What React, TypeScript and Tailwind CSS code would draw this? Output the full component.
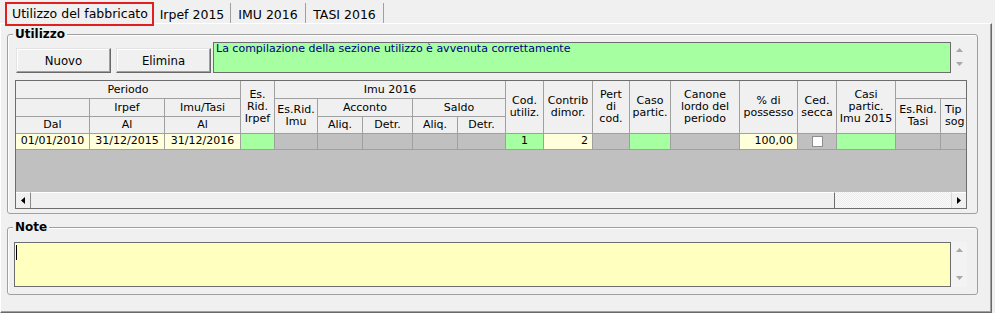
import React from "react";

const hc =
  "flex items-center justify-center text-center border-r border-b border-[#a0a0a0] bg-[#f0f0f0] leading-[12px] overflow-hidden whitespace-nowrap";
const dc = "flex items-center border-r border-b border-[#a0a0a0] overflow-hidden whitespace-nowrap";

function Group({
  label,
  className,
  children,
}: {
  label: string;
  className: string;
  children: React.ReactNode;
}) {
  return (
    <div className={`relative border border-[#a0a0a0] rounded-[3px] shadow-[inset_1px_1px_0_#ffffff] ${className}`}>
      <span className="absolute left-[5px] top-[-8px] px-[2px] bg-[#f0f0f0] text-[12px] font-bold leading-[14px]">
        {label}
      </span>
      {children}
    </div>
  );
}

function UpDown({ topGap, midGap }: { topGap: string; midGap: string }) {
  return (
    <div className="w-[16px] flex flex-col items-center">
      <svg width="7" height="4" className={topGap}>
        <polygon points="0,4 3.5,0 7,4" fill="#a8a8a8" />
      </svg>
      <svg width="7" height="4" className={midGap}>
        <polygon points="0,0 3.5,4 7,0" fill="#a8a8a8" />
      </svg>
    </div>
  );
}

function Btn({ children, className }: { children: React.ReactNode; className: string }) {
  return (
    <div
      className={`h-[25px] w-[95px] flex items-center justify-center bg-[#f0f0f0] border border-t-[#e3e3e3] border-l-[#e3e3e3] border-r-[#696969] border-b-[#696969] shadow-[inset_-1px_-1px_0_#a0a0a0,inset_1px_1px_0_#ffffff] text-[13px] font-['DejaVu_Sans_Condensed','DejaVu_Sans',sans-serif] ${className}`}
    >
      {children}
    </div>
  );
}

export default function App() {
  return (
    <div className="w-[995px] h-[313px] bg-[#f0f0f0] flex flex-col font-['DejaVu_Sans',sans-serif] text-black overflow-hidden">
      {/* Tabs */}
      <div className="h-[23px] shrink-0 flex items-end pl-[5px] relative z-10 text-[12.5px]">
        <div className="h-[24px] mb-[-3px] w-[149px] border-2 border-[#e02020] bg-[#f0f0f0] pl-[5px] leading-[20px] whitespace-nowrap">
          Utilizzo del fabbricato
        </div>
        <div className="h-[20px] w-[77px] border-r border-[#a0a0a0] pt-[3px] leading-[17px] text-center whitespace-nowrap">
          Irpef 2015
        </div>
        <div className="h-[20px] w-[75px] border-r border-[#a0a0a0] pt-[3px] leading-[17px] text-center whitespace-nowrap">
          IMU 2016
        </div>
        <div className="h-[20px] w-[78px] border-r border-[#a0a0a0] pt-[3px] leading-[17px] text-center whitespace-nowrap">
          TASI 2016
        </div>
      </div>

      {/* Panel */}
      <div className="h-[290px] w-[992px] border-t border-l border-t-white border-l-white border-r border-b border-r-[#696969] border-b-[#696969] shadow-[inset_-1px_-1px_0_#a0a0a0] pl-[6px] flex flex-col">
        <Group label="Utilizzo" className="mt-[10px] h-[180px] w-[971px] pl-[7px] pt-[7px] flex flex-col">
          <div className="h-[31px] flex items-end">
            <Btn className="ml-[1px]">Nuovo</Btn>
            <Btn className="ml-[5px]">Elimina</Btn>
            <div className="ml-[2px] w-[738px] h-[31px] self-start bg-[#a6ffa0] border border-[#6d6d6d] pl-[2px] text-[11px] leading-[12px] text-[#000080] whitespace-nowrap">
              La compilazione della sezione utilizzo è avvenuta correttamente
            </div>
            <div className="self-start h-[31px]">
              <UpDown topGap="mt-[6px]" midGap="mt-[10px]" />
            </div>
          </div>

          {/* Grid */}
          <div className="mt-[7px] w-[952px] h-[129px] border border-[#6d6d6d] flex flex-col">
            <div className="h-[111px] bg-[#c0c0c0] overflow-hidden">
              <div className="w-[962px] grid grid-cols-[74px_75px_76px_34px_43px_45px_50px_45px_48px_38px_49px_37px_41px_69px_58px_39px_59px_45px_37px] grid-rows-[18px_18px_17px_16px] text-[11px]">
                {/* Row 1 */}
                <div className={`${hc} col-span-3`}>Periodo</div>
                <div className={`${hc} row-span-3`}>
                  Es.<br />Rid.<br />Irpef
                </div>
                <div className={`${hc} col-span-5`}>Imu 2016</div>
                <div className={`${hc} row-span-3`}>
                  Cod.<br />utiliz.
                </div>
                <div className={`${hc} row-span-3`}>
                  Contrib<br />dimor.
                </div>
                <div className={`${hc} row-span-3`}>
                  Pert<br />di<br />cod.
                </div>
                <div className={`${hc} row-span-3`}>
                  Caso<br />partic.
                </div>
                <div className={`${hc} row-span-3`}>
                  Canone<br />lordo del<br />periodo
                </div>
                <div className={`${hc} row-span-3`}>
                  % di<br />possesso
                </div>
                <div className={`${hc} row-span-3`}>
                  Ced.<br />secca
                </div>
                <div className={`${hc} row-span-3`}>
                  Casi<br />partic.<br />Imu 2015
                </div>
                <div className={`${hc} col-span-2`}></div>

                {/* Row 2 */}
                <div className={hc}></div>
                <div className={hc}>Irpef</div>
                <div className={hc}>Imu/Tasi</div>
                <div className={`${hc} row-span-2`}>
                  Es.Rid.<br />Imu
                </div>
                <div className={`${hc} col-span-2`}>Acconto</div>
                <div className={`${hc} col-span-2`}>Saldo</div>
                <div className={`${hc} row-span-2`}>
                  Es.Rid.<br />Tasi
                </div>
                <div className="flex items-center justify-start text-left pl-[4px] border-r border-b border-[#a0a0a0] bg-[#f0f0f0] leading-[12px] overflow-hidden whitespace-nowrap row-span-2">
                  Tip<br />sog
                </div>

                {/* Row 3 */}
                <div className={hc}>Dal</div>
                <div className={hc}>Al</div>
                <div className={hc}>Al</div>
                <div className={hc}>Aliq.</div>
                <div className={hc}>Detr.</div>
                <div className={hc}>Aliq.</div>
                <div className={hc}>Detr.</div>

                {/* Data row */}
                <div className={`${dc} justify-center bg-[#ffffdc]`}>01/01/2010</div>
                <div className={`${dc} justify-center bg-[#ffffdc]`}>31/12/2015</div>
                <div className={`${dc} justify-center bg-[#ffffdc]`}>31/12/2016</div>
                <div className={`${dc} bg-[#a6ffa0]`}></div>
                <div className={`${dc} bg-[#c0c0c0]`}></div>
                <div className={`${dc} bg-[#c0c0c0]`}></div>
                <div className={`${dc} bg-[#c0c0c0]`}></div>
                <div className={`${dc} bg-[#c0c0c0]`}></div>
                <div className={`${dc} bg-[#c0c0c0]`}></div>
                <div className={`${dc} justify-center bg-[#a6ffa0]`}>1</div>
                <div className={`${dc} justify-end pr-[4px] bg-[#ffffdc]`}>2</div>
                <div className={`${dc} bg-[#c0c0c0]`}></div>
                <div className={`${dc} bg-[#a6ffa0]`}></div>
                <div className={`${dc} bg-[#c0c0c0]`}></div>
                <div className={`${dc} justify-end pr-[4px] bg-[#ffffdc]`}>100,00</div>
                <div className={`${dc} justify-center bg-[#c0c0c0]`}>
                  <div className="w-[11px] h-[11px] bg-white border border-[#8e8e8e]" />
                </div>
                <div className={`${dc} bg-[#a6ffa0]`}></div>
                <div className={`${dc} bg-[#c0c0c0]`}></div>
                <div className={`${dc} bg-[#c0c0c0]`}></div>
              </div>
            </div>

            {/* Horizontal scrollbar */}
            <div className="h-[16px] flex">
              <div className="w-[15px] h-[16px] bg-[#f0f0f0] border-t border-t-white border-r border-r-[#8a8a8a] flex items-center justify-center">
                <svg width="4" height="7">
                  <polygon points="4,0 0,3.5 4,7" fill="#000" />
                </svg>
              </div>
              <div className="w-[804px] h-[16px] bg-[#f0f0f0] border-t border-t-white border-r border-r-[#6d6d6d]" />
              <div className="flex-1 h-[16px] bg-[#f6f6f6] bg-[image:repeating-conic-gradient(#ececec_0_25%,#fafafa_0_50%)] bg-[length:2px_2px]" />
              <div className="w-[15px] h-[16px] bg-[#f0f0f0] border-t border-t-white border-l border-l-[#d8d8d8] flex items-center justify-center">
                <svg width="4" height="7">
                  <polygon points="0,0 4,3.5 0,7" fill="#000" />
                </svg>
              </div>
            </div>
          </div>
        </Group>

        <Group label="Note" className="mt-[13px] h-[68px] w-[971px] pl-[6px] pt-[14px] flex items-start">
          <div className="w-[937px] h-[45px] bg-[#ffffc0] border border-[#6d6d6d]">
            <div className="ml-[1px] mt-[2px] w-[1px] h-[15px] bg-black" />
          </div>
          <div className="h-[45px] bg-[#f3f3f3]">
            <UpDown topGap="mt-[6px]" midGap="mt-[24px]" />
          </div>
        </Group>
      </div>
    </div>
  );
}
